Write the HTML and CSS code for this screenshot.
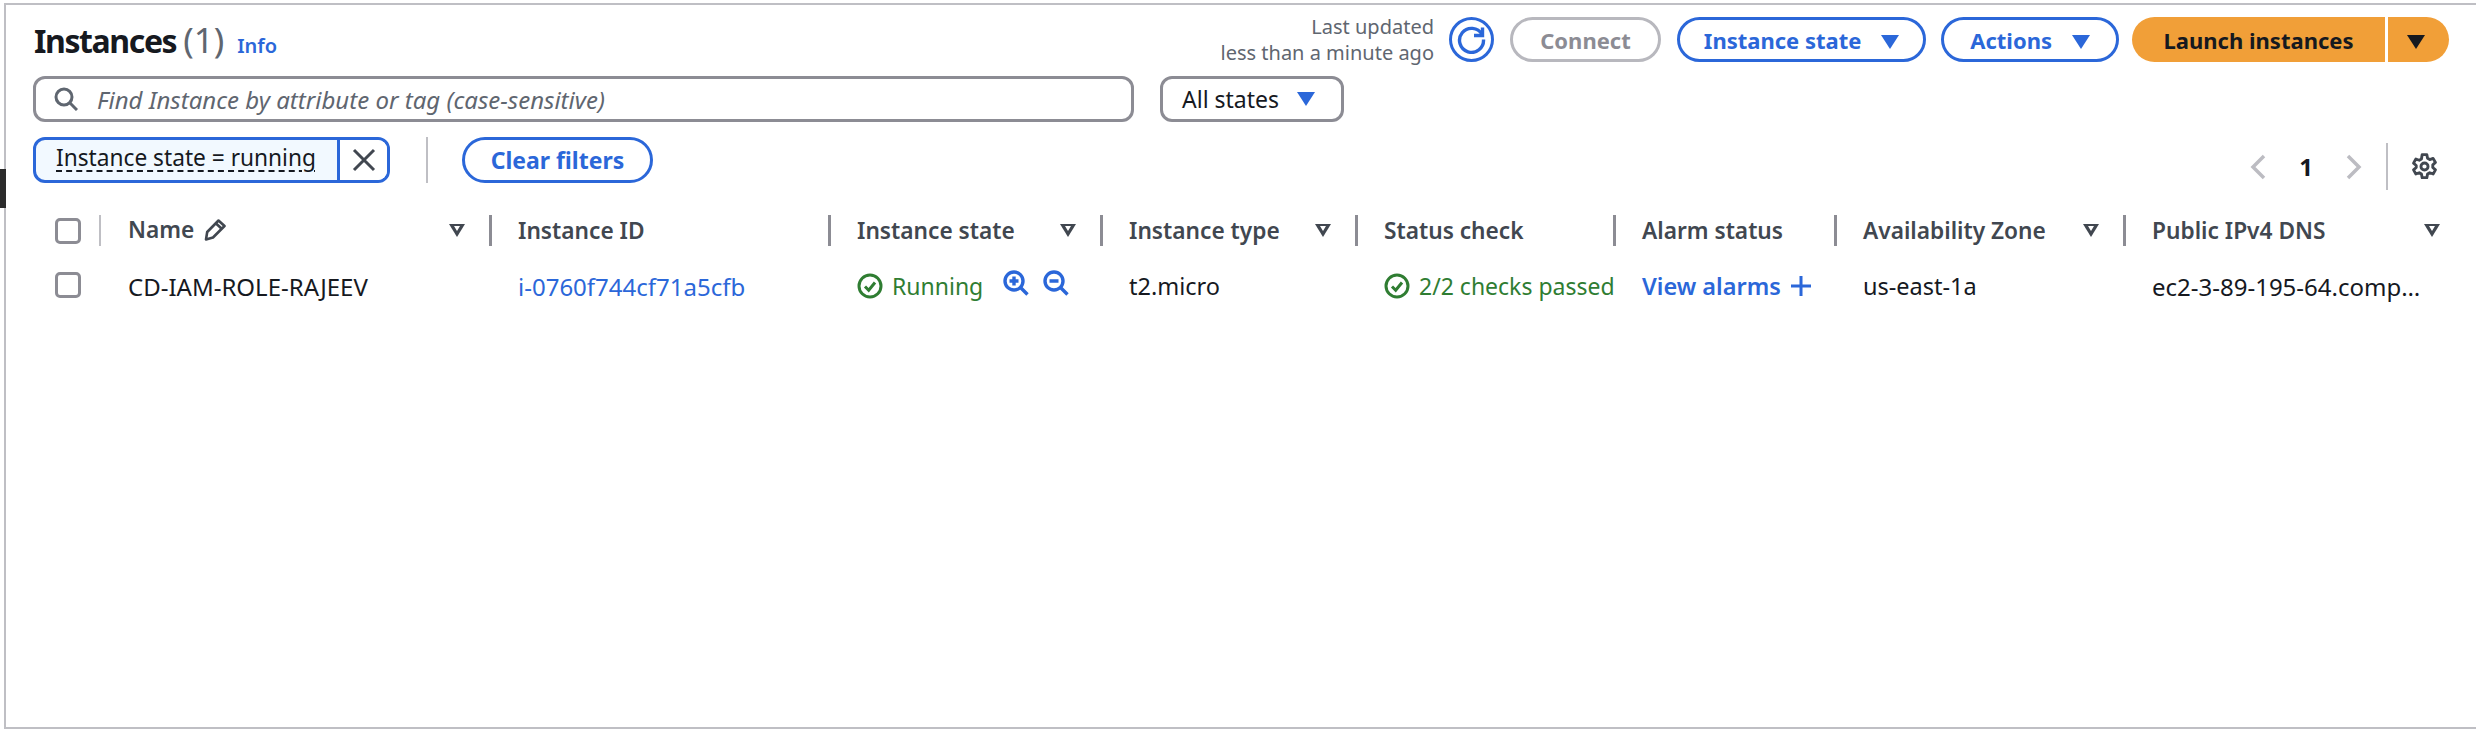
FILE: index.html
```html
<!DOCTYPE html>
<html lang="en">
<head>
    <meta charset="UTF-8">
    <link rel="stylesheet" href="styles.css">
    <title>Instances</title>
</head>
<body>
    <div class="edgeTab"></div>
    <div class="frame">
        <div class="topRow">
            <div class="titleBox">
                <h1>Instances <span class="count">(1)</span></h1>
                <a class="info">Info</a>
            </div>
            <div class="actions">
                <div class="updated">Last updated<br>less than a minute ago</div>
                <button class="btn refreshBtn" aria-label="Refresh">
                    <svg width="29" height="29" viewBox="0 0 29 29" fill="none" stroke="#2b67d9" stroke-width="3.4">
                        <path d="M25 9.5A12 12 0 1 0 26.5 14.5"/>
                        <path d="M25.5 2.5V10.5H17" stroke-linejoin="miter"/>
                    </svg>
                </button>
                <button class="btn connectBtn">Connect</button>
                <button class="btn stateBtn">Instance state <span class="caret"></span></button>
                <button class="btn actionsBtn">Actions <span class="caret"></span></button>
                <div class="launch">
                    <button class="launchMain">Launch instances</button>
                    <button class="launchMore" aria-label="More"><span class="caret dark"></span></button>
                </div>
            </div>
        </div>

        <div class="searchRow">
            <div class="searchBox">
                <svg width="24" height="24" viewBox="0 0 24 24" fill="none" stroke="#5f6670" stroke-width="3">
                    <circle cx="10" cy="10" r="8"/>
                    <path d="M16 16l7 7"/>
                </svg>
                <span>Find Instance by attribute or tag (case-sensitive)</span>
            </div>
            <div class="statesBox">All states <span class="caret"></span></div>
        </div>

        <div class="filterRow">
            <div class="token">
                <span class="tokenText">Instance state = running</span>
                <span class="tokenClose">
                    <svg width="24" height="24" viewBox="0 0 24 24" fill="none" stroke="#414750" stroke-width="3">
                        <path d="M2 2l20 20M22 2L2 22"/>
                    </svg>
                </span>
            </div>
            <div class="filterDivider"></div>
            <button class="btn clearBtn">Clear filters</button>
            <div class="pager">
                <svg class="chev" width="16" height="26" viewBox="0 0 16 26" fill="none" stroke="#bcbcc2" stroke-width="3.5"><path d="M14 2L3 13l11 11"/></svg>
                <span class="pageNum">1</span>
                <svg class="chev" width="16" height="26" viewBox="0 0 16 26" fill="none" stroke="#bcbcc2" stroke-width="3.5"><path d="M2 2l11 11L2 24"/></svg>
                <div class="pagerDivider"></div>
                <svg width="27" height="27" viewBox="0 0 16 16" fill="none" stroke="#414750" stroke-width="1.7" stroke-linejoin="round">
                    <circle cx="8" cy="8" r="2.1"/>
                    <path d="M6.6 1h2.8l.4 2.1 1.3.8 2-.7 1.4 2.4-1.6 1.4v1.6l1.6 1.4-1.4 2.4-2-.7-1.3.8-.4 2.1H6.6l-.4-2.1-1.3-.8-2 .7-1.4-2.4 1.6-1.4V7.4L1.5 6l1.4-2.4 2 .7 1.3-.8z"/>
                </svg>
            </div>
        </div>

        <div class="table">
            <div class="headCell checkCell"><span class="check"></span></div>
            <div class="headCell first">
                <span class="nameHead">Name
                    <svg width="23" height="23" viewBox="0 0 23 23" fill="none" stroke="#414750" stroke-width="2.6" stroke-linejoin="round">
                        <path d="M2 21.5l1.2-7.5L14.5 2.5l6 5.5L9 19.5z"/>
                        <path d="M12 5.5l6 5.5"/>
                    </svg>
                </span>
                <span class="sort"></span>
            </div>
            <div class="headCell">Instance ID</div>
            <div class="headCell">Instance state <span class="sort"></span></div>
            <div class="headCell">Instance type <span class="sort"></span></div>
            <div class="headCell">Status check</div>
            <div class="headCell">Alarm status</div>
            <div class="headCell">Availability Zone <span class="sort"></span></div>
            <div class="headCell last">Public IPv4 DNS <span class="sort"></span></div>

            <div class="cell checkCell"><span class="check"></span></div>
            <div class="cell first">CD-IAM-ROLE-RAJEEV</div>
            <div class="cell"><a class="link">i-0760f744cf71a5cfb</a></div>
            <div class="cell">
                <span class="status">
                    <svg width="26" height="26" viewBox="0 0 26 26" fill="none" stroke="#2f7d32" stroke-width="3"><circle cx="13" cy="13" r="11"/><path d="M8 13.5l3.7 3.7L18 9.5"/></svg>
                    Running
                </span>
                <svg class="zoomIcon zoomIn" width="26" height="26" viewBox="0 0 26 26" fill="none" stroke="#2b67d9" stroke-width="3.4"><circle cx="11" cy="11" r="9"/><path d="M17.5 17.5l7 7M6.5 11h9M11 6.5v9"/></svg>
                <svg class="zoomIcon" width="26" height="26" viewBox="0 0 26 26" fill="none" stroke="#2b67d9" stroke-width="3.4"><circle cx="11" cy="11" r="9"/><path d="M17.5 17.5l7 7M6.5 11h9"/></svg>
            </div>
            <div class="cell small">t2.micro</div>
            <div class="cell">
                <span class="status">
                    <svg width="26" height="26" viewBox="0 0 26 26" fill="none" stroke="#2f7d32" stroke-width="3"><circle cx="13" cy="13" r="11"/><path d="M8 13.5l3.7 3.7L18 9.5"/></svg>
                    2/2 checks passed
                </span>
            </div>
            <div class="cell">
                <a class="link alarm">View alarms</a>
                <svg width="22" height="22" viewBox="0 0 22 22" fill="none" stroke="#2b67d9" stroke-width="3"><path d="M11 1v20M1 11h20"/></svg>
            </div>
            <div class="cell small">us-east-1a</div>
            <div class="cell"><span class="dns">ec2-3-89-195-64.compute-1.amazonaws.com</span></div>
        </div>
    </div>
</body>
</html>
```

FILE: styles.css
```css
:root {
    --blue: #2b67d9;
    --gray-border: #8c8c94;
    --frame-line: #bfbfc4;
    --head-text: #414750;
    --text: #16191f;
    --muted: #5f6670;
}

* {
    box-sizing: border-box;
}

html,
body {
    height: 100%;
}

body {
    font-family: "Noto Sans", sans-serif;
    font-size: 22px;
    color: var(--text);
    background-color: white;
    margin: 0;
    padding: 3px 0 1px 4px;
    overflow: hidden;
}

.edgeTab {
    position: absolute;
    left: 0;
    top: 169px;
    width: 6px;
    height: 39px;
    background-color: #2b2b2b;
}

.frame {
    height: 100%;
    border-top: 2px solid var(--frame-line);
    border-left: 2px solid var(--frame-line);
    border-bottom: 2px solid var(--frame-line);
    padding: 12px 27px 0;
}

button {
    font-family: inherit;
    font-size: 22px;
    font-weight: 700;
    padding: 0;
    background: none;
}

/* top row */
.topRow {
    display: flex;
    justify-content: space-between;
    align-items: center;
    height: 45px;
}

.titleBox {
    display: flex;
    align-items: baseline;
    gap: 13px;
    padding-left: 1px;
}

h1 {
    font-size: 32px;
    font-weight: 700;
    letter-spacing: -1.4px;
    margin: 0;
    color: var(--text);
}

.count {
    font-size: 35px;
    font-weight: 400;
    letter-spacing: 0;
    color: var(--muted);
}

.info {
    font-size: 20px;
    font-weight: 600;
    color: var(--blue);
}

.actions {
    display: flex;
    align-items: center;
}

.updated {
    font-size: 20px;
    line-height: 26px;
    text-align: right;
    color: var(--muted);
    margin-right: 15px;
}

.btn {
    height: 45px;
    border: 3px solid var(--blue);
    border-radius: 24px;
    color: var(--blue);
}

.refreshBtn {
    width: 45px;
    display: flex;
    align-items: center;
    justify-content: center;
    margin-right: 16px;
}

.connectBtn {
    width: 151px;
    border-color: #b8b8be;
    color: #8c8c94;
    margin-right: 16px;
}

.stateBtn {
    width: 249px;
    margin-right: 15px;
}

.actionsBtn {
    width: 178px;
    margin-right: 13px;
}

.caret {
    display: inline-block;
    width: 0;
    height: 0;
    margin-left: 14px;
    border-left: 9px solid transparent;
    border-right: 9px solid transparent;
    border-top: 14px solid var(--blue);
}

.caret.dark {
    margin-left: 0;
    margin-right: 6px;
    border-top-color: #16191f;
}

.launch {
    display: flex;
    height: 45px;
}

.launchMain {
    width: 253px;
    border: none;
    border-radius: 24px 0 0 24px;
    background-color: #f19f38;
    color: #16191f;
}

.launchMore {
    width: 61px;
    margin-left: 3px;
    border: none;
    border-radius: 0 24px 24px 0;
    background-color: #f19f38;
}

/* search */
.searchRow {
    display: flex;
    gap: 26px;
    margin-top: 14px;
}

.searchBox,
.statesBox {
    display: flex;
    align-items: center;
    height: 46px;
    border: 3px solid var(--gray-border);
    border-radius: 12px;
}

.searchBox {
    width: 1101px;
    padding-left: 18px;
    gap: 19px;
    font-size: 24px;
    font-style: italic;
    color: var(--muted);
}

.statesBox {
    width: 184px;
    padding-left: 19px;
    font-size: 23px;
    color: var(--text);
}

.statesBox .caret {
    margin-left: 18px;
}

/* filter row */
.filterRow {
    display: flex;
    align-items: center;
    height: 46px;
    margin-top: 15px;
}

.token {
    display: flex;
    width: 357px;
    height: 46px;
    border: 3px solid var(--blue);
    border-radius: 12px;
    background-color: #f2f9ff;
    overflow: hidden;
}

.tokenText {
    flex: 1;
    padding-left: 20px;
    font-size: 22.7px;
    line-height: 36px;
    text-decoration: underline dashed #16191f 2px;
    text-underline-offset: 4px;
}

.tokenClose {
    display: flex;
    align-items: center;
    justify-content: center;
    width: 50px;
    border-left: 3px solid var(--blue);
    background-color: white;
}

.filterDivider {
    width: 2px;
    height: 46px;
    margin-left: 36px;
    background-color: var(--frame-line);
}

.clearBtn {
    width: 191px;
    height: 46px;
    margin-left: 34px;
    font-size: 23px;
}

.pager {
    display: flex;
    align-items: center;
    align-self: flex-start;
    height: 47px;
    margin-top: 6px;
    margin-left: auto;
    padding-right: 11px;
}

.pageNum {
    width: 80px;
    text-align: center;
    font-size: 24px;
    font-weight: 700;
}

.pagerDivider {
    width: 2px;
    height: 47px;
    margin: 0 23px 0 24px;
    background-color: var(--frame-line);
}

/* table */
.table {
    display: grid;
    grid-template-columns: 66px 390px 339px 272px 255px 258px 221px 289px 326px;
    grid-template-rows: 31px 50px;
    margin-top: 32px;
}

.headCell {
    display: flex;
    align-items: center;
    justify-content: space-between;
    font-size: 22.7px;
    font-weight: 600;
    color: var(--head-text);
    border-left: 3px solid var(--gray-border);
    padding-left: 26px;
}

.headCell.first {
    border-left: 2px solid var(--frame-line);
    padding-left: 27px;
}

.headCell.checkCell,
.cell.checkCell {
    border-left: none;
    padding-left: 22px;
    padding-top: 0;
}

.cell.checkCell {
    padding-top: 28px;
}

.nameHead {
    display: flex;
    align-items: center;
    gap: 10px;
    margin-top: -3px;
}

/* hollow sort triangle */
.sort {
    position: relative;
    width: 0;
    height: 0;
    margin-right: 24px;
    border-left: 8px solid transparent;
    border-right: 8px solid transparent;
    border-top: 13px solid var(--head-text);
}

.sort::after {
    content: "";
    position: absolute;
    left: -3px;
    top: -11px;
    width: 0;
    height: 0;
    border-left: 3px solid transparent;
    border-right: 3px solid transparent;
    border-top: 5px solid white;
}

.headCell.last .sort {
    margin-right: 9px;
}

.check {
    display: block;
    width: 26px;
    height: 26px;
    border: 3px solid var(--gray-border);
    border-radius: 5px;
}

.cell {
    display: flex;
    align-items: center;
    padding-left: 29px;
    padding-top: 30px;
    font-size: 24px;
    white-space: nowrap;
}

.cell.small {
    font-size: 23.5px;
}

.cell.first {
    padding-left: 29px;
}

.link {
    color: var(--blue);
}

.alarm {
    font-size: 23.5px;
    font-weight: 600;
    margin-right: 9px;
}

.status {
    display: flex;
    align-items: center;
    gap: 9px;
    font-size: 23px;
    color: #2f7d32;
}

.zoomIcon {
    margin-left: 14px;
    margin-top: -6px;
}

.zoomIcon.zoomIn {
    margin-left: 20px;
}

.dns {
    display: block;
    width: 277px;
    overflow: hidden;
    text-overflow: ellipsis;
}
```
